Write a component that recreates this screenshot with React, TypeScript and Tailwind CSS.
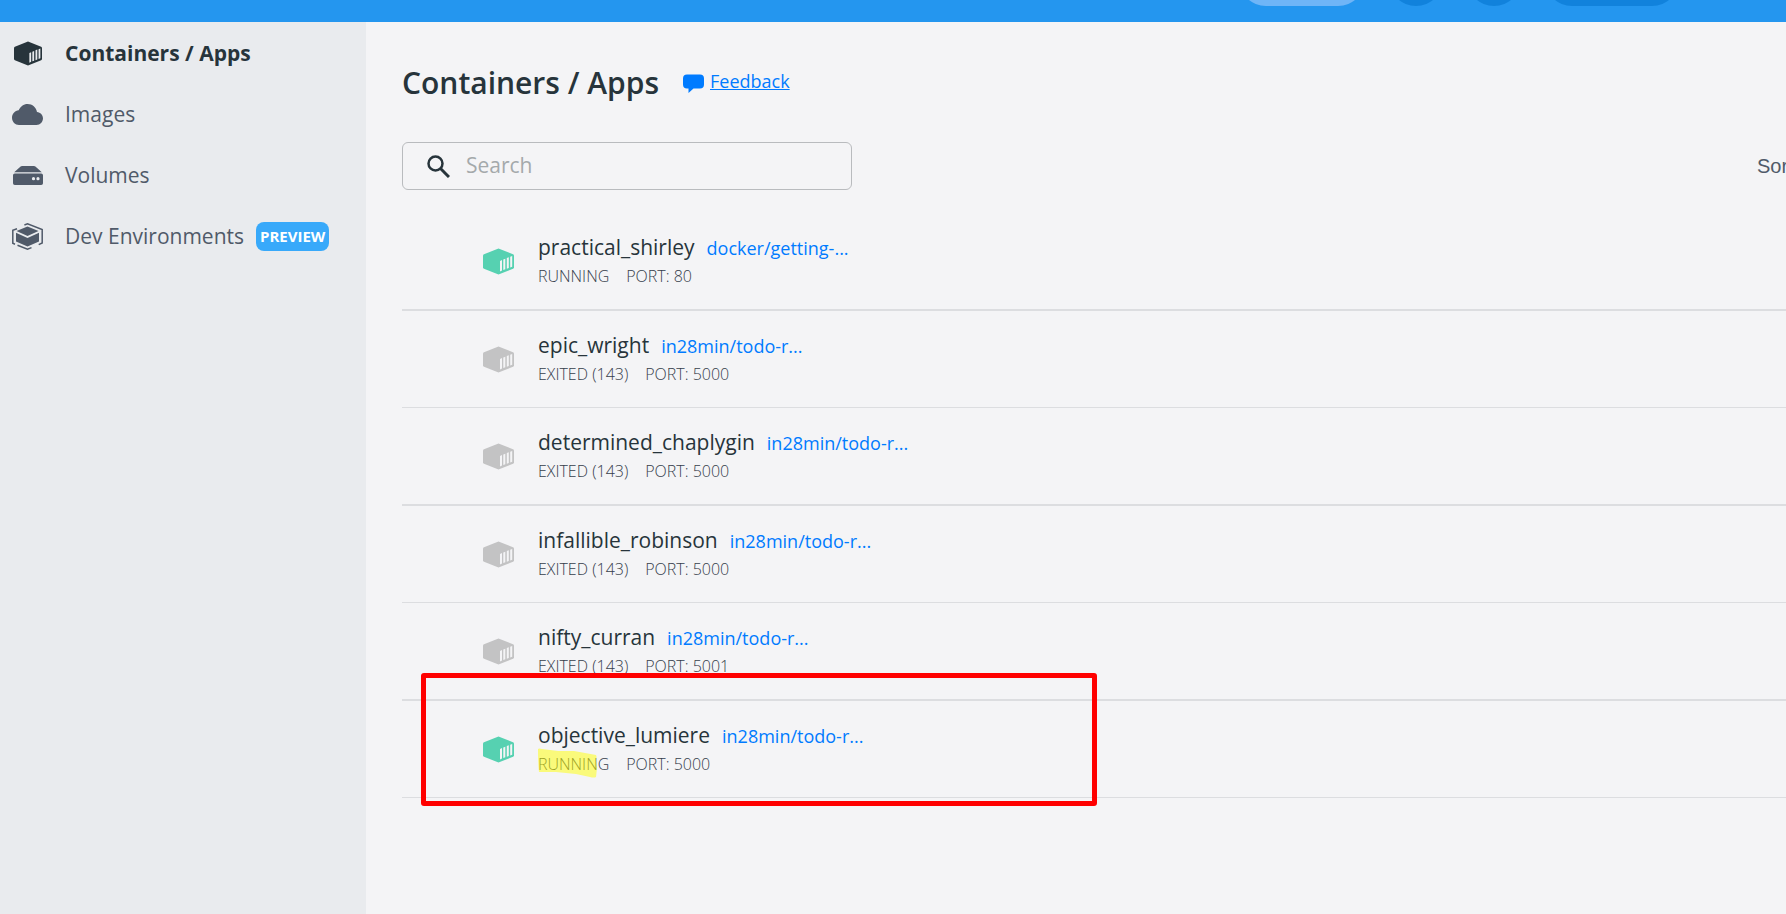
import type { ReactNode } from "react";

type Container = {
  name: string;
  image: string;
  status: string;
  port: number;
  running: boolean;
  marked?: boolean;
};

const containers: Container[] = [
  { name: "practical_shirley", image: "docker/getting-...", status: "RUNNING", port: 80, running: true },
  { name: "epic_wright", image: "in28min/todo-r...", status: "EXITED (143)", port: 5000, running: false },
  { name: "determined_chaplygin", image: "in28min/todo-r...", status: "EXITED (143)", port: 5000, running: false },
  { name: "infallible_robinson", image: "in28min/todo-r...", status: "EXITED (143)", port: 5000, running: false },
  { name: "nifty_curran", image: "in28min/todo-r...", status: "EXITED (143)", port: 5001, running: false },
  { name: "objective_lumiere", image: "in28min/todo-r...", status: "RUNNING", port: 5000, running: true, marked: true },
];

function ContainerIcon({ className, slot }: { className: string; slot: string }) {
  return (
    <svg viewBox="0 0 31 27" className={className} preserveAspectRatio="none" aria-hidden="true">
      <path d="M15.5 0.5 30 6.2Q31 6.6 31 7.8V19.2Q31 20.4 30 20.8L15.5 26.5 1 20.8Q0 20.4 0 19.2V7.8Q0 6.600 1 6.200Z" fill="currentColor" />
      <path d="M17 12.900 19 12.100V22.500L17 23.400ZM20.300 11.500 22.300 10.700V21.200L20.300 22ZM23.800 10.100 25.800 9.300V20L23.800 20.800ZM27.200 8.800 29.200 8V18.700L27.200 19.500Z" className={slot} />
    </svg>
  );
}

function CloudIcon() {
  return (
    <svg viewBox="0 0 31 21" className="h-[21px] w-[31px]" fill="currentColor" aria-hidden="true">
      <path d="M7 21C3.100 21 0 17.900 0 13.800 0 9.900 2.900 6.700 6.700 6.300 8.400 2.500 11.500 0 15.600 0 20.400 0 24.200 3.300 25 7.900 28.400 8.200 31 10.900 31 14.300 31 18 28.200 21 24.500 21Z" />
    </svg>
  );
}

function DriveIcon() {
  return (
    <svg viewBox="0 0 30 19" className="h-[19px] w-[30px]" fill="currentColor" aria-hidden="true">
      <path d="M7.600 0.600Q8.200 0 9 0H21Q21.800 0 22.400 0.600L28.800 6.300H1.200Z" />
      <path
        fillRule="evenodd"
        d="M1.800 7.500H28.200Q30 7.500 30 9.300V17.200Q30 19 28.200 19H1.800Q0 19 0 17.200V9.300Q0 7.500 1.800 7.500ZM20.500 11.100A1.600 1.600 0 1 0 20.500 14.300 1.600 1.600 0 1 0 20.500 11.100ZM25 11.100A1.600 1.600 0 1 0 25 14.300 1.600 1.600 0 1 0 25 11.100Z"
      />
    </svg>
  );
}

function DevIcon() {
  return (
    <svg viewBox="0 0 31 27" className="h-[27px] w-[31px]" fill="currentColor" aria-hidden="true">
      <path d="M15.500 3.500 26.500 8 15.500 13 4.500 8Z" />
      <path d="M4 9.700 15.500 14.900 27 9.700V18.600L15.500 23.600 4 18.600Z" />
      <path
        d="M12.400 2 15.500 0.800 30.200 6.600V20L26.700 21.600M5 5.700 0.800 7.300V20.200L3 21.200M5.500 22.200 15.500 26.200 19.500 24.600"
        fill="none"
        stroke="currentColor"
        strokeWidth="1.500"
      />
    </svg>
  );
}

function NavItem({ icon, label, active, children }: { icon: ReactNode; label: string; active?: boolean; children?: ReactNode }) {
  return (
    <li>
      <a href="#" aria-current={active ? "page" : undefined} className="flex h-[61px] items-center pl-3">
        <span className="flex w-[31px] justify-center">{icon}</span>
        <span className={active ? "ml-[22px] text-[21px] font-bold text-[#27343b]" : "ml-[22px] text-[21px]"}>{label}</span>
        {children}
      </a>
    </li>
  );
}

function ContainerRow({ item }: { item: Container }) {
  return (
    <li className="relative border-b border-[#dcdde0] odd:border-b-2">
      <div className="flex h-24 items-center pl-[81px]">
        <ContainerIcon
          className={item.running ? "h-[27px] w-[31px] text-[#56d1b1]" : "h-[27px] w-[31px] text-[#c3c3c4]"}
          slot="fill-[#f4f4f6]"
        />
        <div className="ml-6 pb-1">
          <div className="flex items-baseline gap-3 leading-8">
            <span className="text-[21px] text-[#27343b]">{item.name}</span>
            <a href="#" className="text-lg leading-8 text-[#007bff]">{item.image}</a>
          </div>
          <div className="flex gap-[17px] text-base leading-6 font-light text-[#36404c]">
            <span className="relative">
              {item.status}
              {item.marked && (
                <svg viewBox="0 0 59 30" className="absolute -top-1 left-0 h-[30px] w-[59px]" aria-hidden="true">
                  <path d="M0 1Q1 0 4 1L20 3 36 3 58 7Q59 9 58 12L59 20 58 29Q56 30 52 29L38 26 18 24 1 24Q0 14 0 1Z" fill="#ffff00" fillOpacity="0.5" />
                </svg>
              )}
            </span>
            <span>PORT: {item.port}</span>
          </div>
        </div>
      </div>
      {item.marked && (
        <div className="pointer-events-none absolute -top-7 left-[19px] h-[133px] w-[676px] rounded-[3px] border-[5px] border-[#ff0000]" />
      )}
    </li>
  );
}

export default function App() {
  return (
    <div className="flex min-h-screen flex-col overflow-hidden bg-[#f4f4f6] font-['Open_Sans','Noto_Sans',sans-serif] text-[#505a69]">
      <header className="flex h-[22px] items-end justify-end gap-6 overflow-hidden bg-[#2496ef] pr-[107px] pb-4">
        <div className="h-[54px] w-[126px] shrink-0 rounded-full bg-[#6fb5f7]" />
        <div className="size-[54px] shrink-0 rounded-full bg-[#1182dc]" />
        <div className="size-[54px] shrink-0 rounded-full bg-[#1182dc]" />
        <div className="h-[54px] w-[134px] shrink-0 rounded-full bg-[#1182dc]" />
      </header>

      <div className="flex flex-1">
        <nav className="w-[366px] shrink-0 bg-[#e9ebee]">
          <ul className="pt-px">
            <NavItem active label="Containers / Apps" icon={<ContainerIcon className="h-[25px] w-7 text-[#27343b]" slot="fill-[#e9ebee]" />} />
            <NavItem label="Images" icon={<CloudIcon />} />
            <NavItem label="Volumes" icon={<DriveIcon />} />
            <NavItem label="Dev Environments" icon={<DevIcon />}>
              <span className="ml-3 rounded-lg bg-[#38a9fa] px-1 text-[15px] leading-[29px] font-bold text-white">PREVIEW</span>
            </NavItem>
          </ul>
        </nav>

        <main className="min-w-0 flex-1 overflow-hidden pt-[41px] pl-9">
          <div className="flex items-center">
            <h1 className="text-[30px] leading-10 font-semibold text-[#27343b]">Containers / Apps</h1>
            <a href="#" className="ml-6 flex items-center gap-[6px] pb-1 text-lg leading-9 text-[#007bff]">
              <svg viewBox="0 0 21 19" className="mt-1 h-[19px] w-[21px]" fill="currentColor" aria-hidden="true">
                <path d="M4 0.500H17Q21 0.500 21 4.500V10.500Q21 14.500 17 14.500H10.500L5.500 19V14.500H4Q0 14.500 0 10.500V4.500Q0 0.500 4 0.500Z" />
              </svg>
              <span className="underline">Feedback</span>
            </a>
          </div>

          <div className="mt-[39px] flex items-center justify-between">
            <label className="flex h-12 w-[450px] items-center rounded-md border border-[#b9bbbe] pl-6">
              <svg viewBox="0 0 23 23" className="h-[23px] w-[23px] text-[#27343b]" fill="none" stroke="currentColor" aria-hidden="true">
                <circle cx="8.500" cy="8.500" r="7" strokeWidth="2.500" />
                <path d="M13.500 13.500 22 22" strokeWidth="3" />
              </svg>
              <input
                type="text"
                aria-label="Search"
                placeholder="Search"
                className="ml-4 min-w-0 flex-1 bg-transparent text-[21px] outline-none placeholder:text-[#a4a9ab]"
              />
            </label>
            <span className="w-[29px] font-['Liberation_Sans',sans-serif] text-xl whitespace-nowrap">Sort</span>
          </div>

          <ul className="mt-[23px]">
            {containers.map((item) => (
              <ContainerRow key={item.name} item={item} />
            ))}
          </ul>
        </main>
      </div>
    </div>
  );
}
